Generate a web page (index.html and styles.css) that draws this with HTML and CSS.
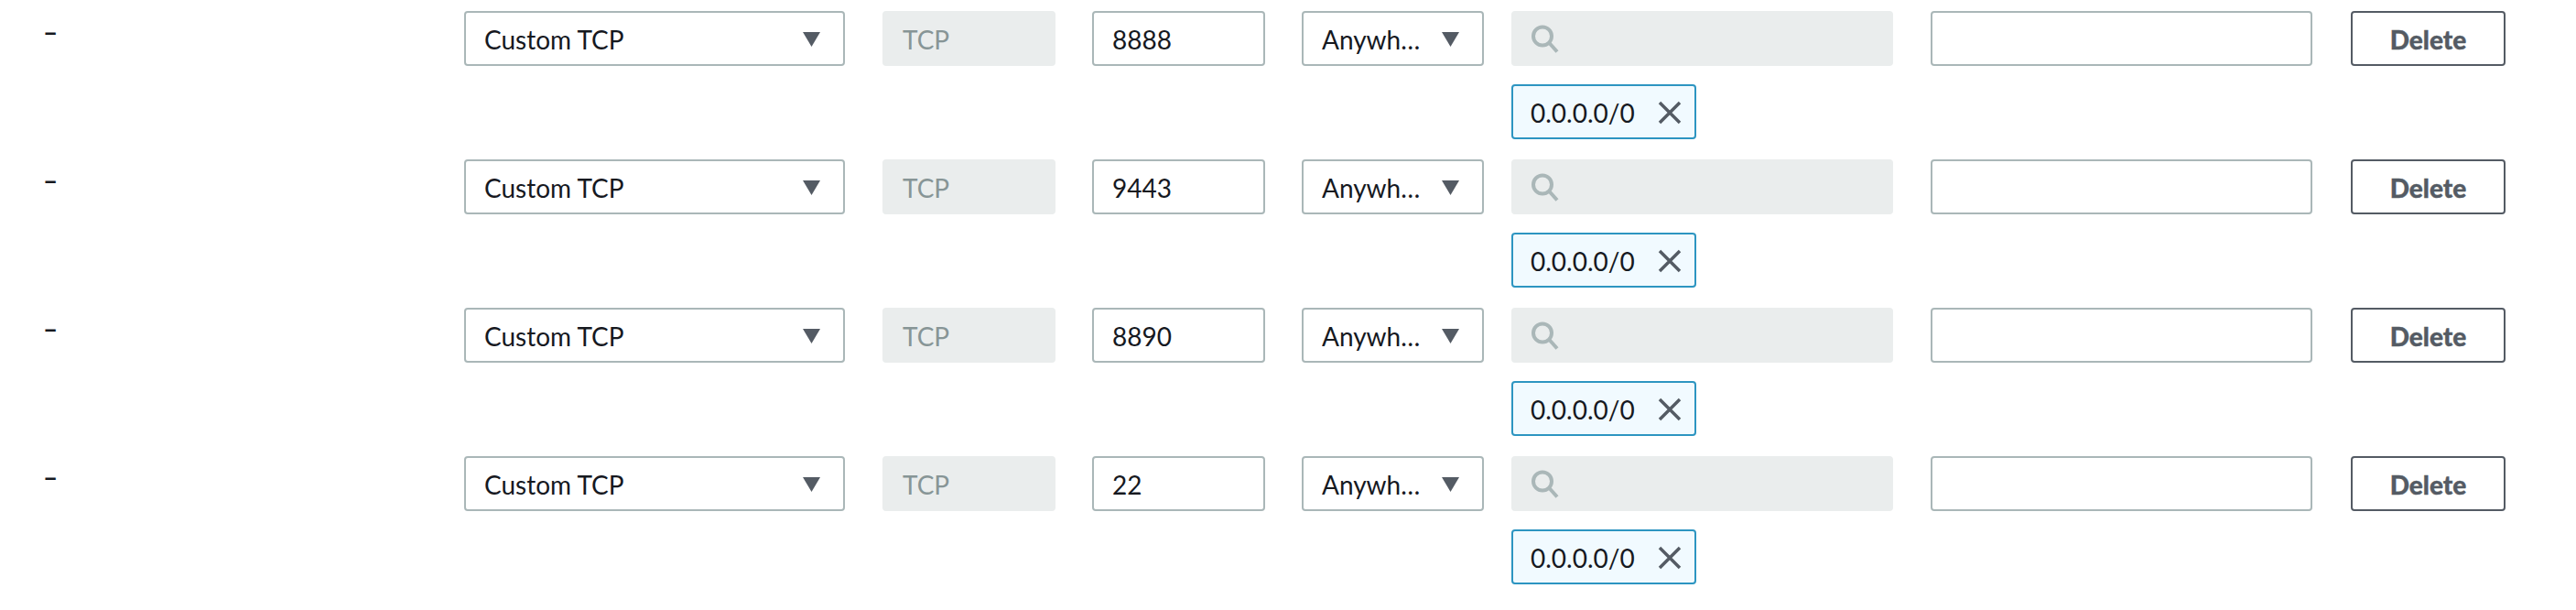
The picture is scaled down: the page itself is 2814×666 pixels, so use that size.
FILE: index.html
```html
<!DOCTYPE html>
<html lang="en">
<head>
<meta charset="utf-8">
<title>Inbound rules</title>
<link rel="stylesheet" href="styles.css">
</head>
<body>
<div class="rules">
  <div class="rule">
    <div class="dash">–</div>
    <div class="box select type"><span class="val">Custom TCP</span><svg class="caret" width="19" height="16" viewBox="0 0 19 16"><path d="M0 0H19L9.5 16Z"/></svg></div>
    <div class="box disabled">TCP</div>
    <div class="box input">8888</div>
    <div class="box select source"><span class="val ellip">Anywhere</span><svg class="caret" width="19" height="16" viewBox="0 0 19 16"><path d="M0 0H19L9.5 16Z"/></svg></div>
    <div class="box search"><svg width="34" height="34" viewBox="0 0 34 34"><circle cx="15" cy="14.5" r="10"/><path d="M22.5 22L31 31.5"/></svg></div>
    <div class="box input desc"></div>
    <button class="delete">Delete</button>
    <div class="token"><span>0.0.0.0/0</span><svg width="26" height="26" viewBox="0 0 26 26"><path d="M2 2L24 24M24 2L2 24"/></svg></div>
  </div>
  <div class="rule">
    <div class="dash">–</div>
    <div class="box select type"><span class="val">Custom TCP</span><svg class="caret" width="19" height="16" viewBox="0 0 19 16"><path d="M0 0H19L9.5 16Z"/></svg></div>
    <div class="box disabled">TCP</div>
    <div class="box input">9443</div>
    <div class="box select source"><span class="val ellip">Anywhere</span><svg class="caret" width="19" height="16" viewBox="0 0 19 16"><path d="M0 0H19L9.5 16Z"/></svg></div>
    <div class="box search"><svg width="34" height="34" viewBox="0 0 34 34"><circle cx="15" cy="14.5" r="10"/><path d="M22.5 22L31 31.5"/></svg></div>
    <div class="box input desc"></div>
    <button class="delete">Delete</button>
    <div class="token"><span>0.0.0.0/0</span><svg width="26" height="26" viewBox="0 0 26 26"><path d="M2 2L24 24M24 2L2 24"/></svg></div>
  </div>
  <div class="rule">
    <div class="dash">–</div>
    <div class="box select type"><span class="val">Custom TCP</span><svg class="caret" width="19" height="16" viewBox="0 0 19 16"><path d="M0 0H19L9.5 16Z"/></svg></div>
    <div class="box disabled">TCP</div>
    <div class="box input">8890</div>
    <div class="box select source"><span class="val ellip">Anywhere</span><svg class="caret" width="19" height="16" viewBox="0 0 19 16"><path d="M0 0H19L9.5 16Z"/></svg></div>
    <div class="box search"><svg width="34" height="34" viewBox="0 0 34 34"><circle cx="15" cy="14.5" r="10"/><path d="M22.5 22L31 31.5"/></svg></div>
    <div class="box input desc"></div>
    <button class="delete">Delete</button>
    <div class="token"><span>0.0.0.0/0</span><svg width="26" height="26" viewBox="0 0 26 26"><path d="M2 2L24 24M24 2L2 24"/></svg></div>
  </div>
  <div class="rule">
    <div class="dash">–</div>
    <div class="box select type"><span class="val">Custom TCP</span><svg class="caret" width="19" height="16" viewBox="0 0 19 16"><path d="M0 0H19L9.5 16Z"/></svg></div>
    <div class="box disabled">TCP</div>
    <div class="box input">22</div>
    <div class="box select source"><span class="val ellip">Anywhere</span><svg class="caret" width="19" height="16" viewBox="0 0 19 16"><path d="M0 0H19L9.5 16Z"/></svg></div>
    <div class="box search"><svg width="34" height="34" viewBox="0 0 34 34"><circle cx="15" cy="14.5" r="10"/><path d="M22.5 22L31 31.5"/></svg></div>
    <div class="box input desc"></div>
    <button class="delete">Delete</button>
    <div class="token"><span>0.0.0.0/0</span><svg width="26" height="26" viewBox="0 0 26 26"><path d="M2 2L24 24M24 2L2 24"/></svg></div>
  </div>
</div>
</body>
</html>
```
FILE: styles.css
```css
html, body {
  margin: 0;
  padding: 0;
  background: #ffffff;
}

body {
  font-family: Lato, "Open Sans", "Liberation Sans", sans-serif;
  font-size: 28px;
  color: #16191f;
}

.rules {
  padding-top: 12px;
}

.rule {
  display: grid;
  grid-template-columns: 507px 457px 229px 229px 229px 458px 459px 169px;
  grid-template-rows: 60px 60px;
  row-gap: 20px;
  margin-bottom: 22px;
}

.dash {
  padding-left: 47px;
  line-height: 44px;
  font-weight: 700;
  color: #16191f;
}

.box {
  box-sizing: border-box;
  height: 60px;
  border: 2px solid #aab7b8;
  border-radius: 4px;
  background: #ffffff;
  display: flex;
  align-items: center;
  padding: 2px 20px 0 20px;
  white-space: nowrap;
}

.select {
  justify-content: space-between;
  padding-right: 25px;
}

.type {
  width: 416px;
}

.source {
  width: 199px;
}

.val {
  display: block;
}

.ellip {
  width: 115px;
  overflow: hidden;
  text-overflow: ellipsis;
}

.caret {
  fill: #545b64;
  flex: none;
}

.disabled {
  width: 189px;
  background: #eaeded;
  border-color: #eaeded;
  color: #879596;
}

.input {
  width: 189px;
}

.desc {
  width: 417px;
}

.search {
  width: 417px;
  background: #eaeded;
  border-color: #eaeded;
  padding: 0 0 0 17px;
}

.search svg {
  fill: none;
  stroke: #aab7b8;
  stroke-width: 4;
}

.delete {
  box-sizing: border-box;
  width: 169px;
  height: 60px;
  border: 2px solid #545b64;
  border-radius: 4px;
  background: #ffffff;
  color: #545b64;
  font-family: inherit;
  font-size: 28px;
  font-weight: 900;
  -webkit-text-stroke: 0.4px #545b64;
  padding: 2px 0 0 0;
  margin: 0;
}

.token {
  grid-column: 6;
  grid-row: 2;
  box-sizing: border-box;
  width: 202px;
  height: 60px;
  border: 2px solid #2d95c1;
  border-radius: 4px;
  background: #f1faff;
  display: flex;
  align-items: center;
  justify-content: space-between;
  padding: 2px 14px 0 19px;
  white-space: nowrap;
}

.token svg {
  fill: none;
  stroke: #545b64;
  stroke-width: 3.5;
  flex: none;
}
```
